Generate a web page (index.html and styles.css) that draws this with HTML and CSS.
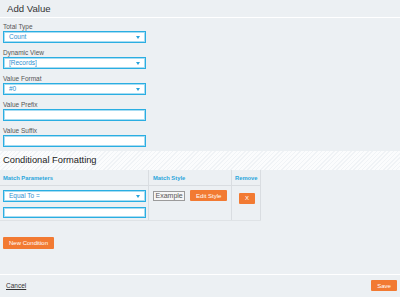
FILE: index.html
```html
<!DOCTYPE html>
<html lang="en">
<head>
    <meta charset="UTF-8">
    <meta name="viewport" content="width=device-width, initial-scale=1.0">
    <title>Add Value</title>
    <link rel="stylesheet" href="styles.css">
</head>
<body>
    <header class="dialog-header">
        <h2>Add Value</h2>
    </header>

    <section class="form-section">
        <div class="field">
            <label>Total Type</label>
            <div class="select">Count</div>
        </div>
        <div class="field">
            <label>Dynamic View</label>
            <div class="select">[Records]</div>
        </div>
        <div class="field">
            <label>Value Format</label>
            <div class="select">#0</div>
        </div>
        <div class="field">
            <label>Value Prefix</label>
            <div class="text-input"></div>
        </div>
        <div class="field">
            <label>Value Suffix</label>
            <div class="text-input"></div>
        </div>
    </section>

    <div class="section-band">Conditional Formatting</div>

    <table class="conditions">
        <thead>
            <tr>
                <th class="col-params">Match Parameters</th>
                <th class="col-style">Match Style</th>
                <th class="col-remove">Remove</th>
            </tr>
        </thead>
        <tbody>
            <tr>
                <td class="col-params">
                    <div class="select">Equal To =</div>
                    <div class="text-input"></div>
                </td>
                <td class="col-style">
                    <div class="style-buttons">
                        <span class="example">Example</span>
                        <button class="btn">Edit Style</button>
                    </div>
                </td>
                <td class="col-remove">
                    <button class="btn btn-x">X</button>
                </td>
            </tr>
        </tbody>
    </table>

    <div class="new-row">
        <button class="btn btn-new">New Condition</button>
    </div>

    <footer class="dialog-footer">
        <a href="#" class="cancel">Cancel</a>
        <button class="btn btn-save">Save</button>
    </footer>
</body>
</html>
```

FILE: styles.css
```css
body {
    font-family: "Liberation Sans", Arial, sans-serif;
    background-color: #ecf0f3;
    margin: 0;
    padding: 0;
    width: 400px;
    height: 297px;
    overflow: hidden;
    color: #444;
}

.dialog-header {
    height: 18px;
    border-bottom: 1px solid #fff;
    padding-left: 7px;
    box-sizing: border-box;
}

.dialog-header h2 {
    margin: 0;
    font-size: 9.6px;
    font-weight: normal;
    line-height: 18px;
    color: #333;
}

.form-section {
    padding: 5px 3px 0 3px;
}

.field {
    width: 143px;
    margin-bottom: 6px;
}

.field:last-child {
    margin-bottom: 0;
}

.field label {
    display: block;
    font-size: 6.5px;
    line-height: 8px;
    color: #555;
}

.select,
.text-input {
    position: relative;
    height: 12px;
    box-sizing: border-box;
    background-color: #fff;
    border: 1px solid #2aaee2;
    box-shadow: inset 0 0 0 1px #a8dcf2;
    font-size: 6.5px;
    line-height: 10px;
    padding-left: 5px;
    color: #2f8fd0;
}

.select::after {
    content: "";
    position: absolute;
    right: 5px;
    top: 4px;
    border-left: 2.5px solid transparent;
    border-right: 2.5px solid transparent;
    border-top: 3px solid #2aa3dc;
}

.section-band {
    margin-top: 4px;
    height: 19px;
    line-height: 19px;
    padding-left: 3px;
    font-size: 9.3px;
    color: #222;
    background: repeating-linear-gradient(135deg, #fbfcfd 0 2px, #f0f3f6 2px 3px);
}

.conditions {
    border-collapse: collapse;
    table-layout: fixed;
    width: 261px;
}

.conditions th {
    height: 15px;
    padding: 0;
    text-align: left;
    font-size: 5.8px;
    font-weight: bold;
    color: #2ba6dc;
    border-bottom: 1px solid #d9dde1;
    vertical-align: middle;
    white-space: nowrap;
}

.conditions td {
    padding: 0;
    vertical-align: top;
    height: 34px;
    border-bottom: 1px solid #dfe3e6;
}

.conditions .col-params {
    width: 145px;
    padding-left: 3px;
}

.col-style,
.col-remove {
    border-left: 1px solid #d9dde1;
}

.col-remove {
    border-right: 1px solid #d9dde1;
}

.conditions .col-style {
    width: 78px;
}

.conditions .col-remove {
    width: 25px;
}

.conditions th.col-style {
    padding-left: 4px;
}

.conditions th.col-remove {
    padding-left: 3px;
}

.conditions td.col-params .select {
    width: 143px;
    margin-top: 4px;
}

.conditions td.col-params .text-input {
    width: 143px;
    margin-top: 5px;
    height: 11px;
}

.style-buttons {
    display: flex;
    align-items: center;
    gap: 5px;
    padding: 4px 0 0 4px;
}

.example {
    display: inline-block;
    height: 10px;
    line-height: 8px;
    padding: 0 1.5px;
    box-sizing: border-box;
    font-size: 7px;
    color: #555;
    background-color: #f6f6f6;
    border: 1px solid #9b9b9b;
}

.btn {
    background-color: #f27a32;
    color: #fff;
    border: none;
    border-radius: 1px;
    font-family: inherit;
    font-size: 6px;
    padding: 0;
    height: 11px;
    cursor: pointer;
}

.style-buttons .btn {
    width: 37px;
}

.btn-x {
    width: 16px;
    margin: 4px 0 0 7px;
}

.new-row {
    padding: 10px 0 0 3px;
    height: 33px;
}

.btn-new {
    width: 51px;
    height: 12px;
}

.dialog-footer {
    border-top: 1px solid #fff;
    margin-top: 10px;
    display: flex;
    justify-content: space-between;
    align-items: center;
    padding: 5px 3px 0 6px;
}

.cancel {
    font-size: 6.5px;
    color: #333;
    text-decoration: underline;
}

.btn-save {
    width: 26px;
    height: 11px;
}
```
